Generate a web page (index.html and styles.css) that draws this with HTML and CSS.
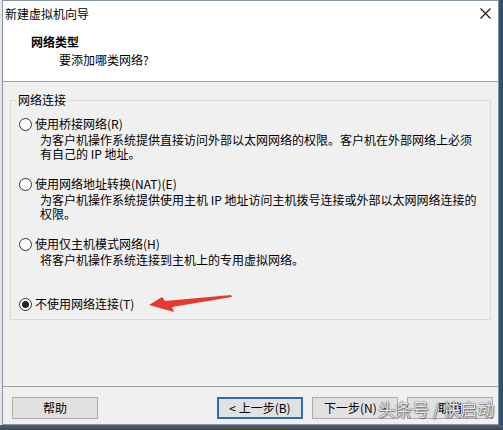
FILE: index.html
```html
<!DOCTYPE html>
<html lang="zh-CN">
<head>
<meta charset="utf-8">
<title>新建虚拟机向导</title>
<link rel="stylesheet" href="styles.css">
</head>
<body>
<div class="window">
  <div class="titlebar">
    <span class="title">新建虚拟机向导</span>
    <svg class="close" width="11" height="11" viewBox="0 0 11 11">
      <path d="M0.5 0.5 L10.5 10.5 M10.5 0.5 L0.5 10.5" stroke="#111" stroke-width="1.1" fill="none"/>
    </svg>
  </div>
  <div class="header">
    <div class="h-title">网络类型</div>
    <div class="h-sub">要添加哪类网络?</div>
  </div>
  <div class="main">
    <fieldset class="group">
      <legend>网络连接</legend>
      <div class="option">
        <div class="row"><span class="radio"></span><span>使用桥接网络(R)</span></div>
        <div class="desc">为客户机操作系统提供直接访问外部以太网网络的权限。客户机在外部网络上必须<br>有自己的 IP 地址。</div>
      </div>
      <div class="option">
        <div class="row"><span class="radio"></span><span>使用网络地址转换(NAT)(E)</span></div>
        <div class="desc">为客户机操作系统提供使用主机 IP 地址访问主机拨号连接或外部以太网网络连接的<br>权限。</div>
      </div>
      <div class="option">
        <div class="row"><span class="radio"></span><span>使用仅主机模式网络(H)</span></div>
        <div class="desc">将客户机操作系统连接到主机上的专用虚拟网络。</div>
      </div>
      <div class="option option-last">
        <div class="row"><span class="radio checked"></span><span>不使用网络连接(T)</span></div>
      </div>
    </fieldset>
  </div>
  <div class="footer">
    <button class="btn btn-help">帮助</button>
    <button class="btn btn-focus">&lt; 上一步(B)</button>
    <button class="btn">下一步(N) &gt;</button>
    <button class="btn">取消</button>
  </div>
</div>

<!-- red pointer drawn next to the last option -->
<svg class="pointer" width="90" height="26" viewBox="0 0 90 26">
  <polygon points="4,15 17,7 20,11 86,5 87,7 27,17 29,22" fill="#e43a2f"/>
</svg>

<div class="stamp">头条号 / 快启动</div>
</body>
</html>
```

FILE: styles.css
```css
html, body {
  margin: 0;
  padding: 0;
}

body {
  width: 503px;
  height: 430px;
  overflow: hidden;
  position: relative;
  background:
    linear-gradient(to bottom, transparent 425px, #55606b 425px, #3a4652 430px),
    linear-gradient(to right, #e6e6e6 2px, #2d5272 2px);
  font-family: "Noto Sans CJK SC", "Microsoft YaHei", sans-serif;
  font-size: 12px;
  color: #000;
}

.window {
  margin-left: 2px;
  width: 497px;
  height: 425px;
  box-sizing: border-box;
  border: 1px solid #8795a3;
  background: #f0f0f0;
  display: flex;
  flex-direction: column;
}

/* title bar */
.titlebar {
  height: 25px;
  flex: none;
  display: flex;
  align-items: center;
  padding-left: 2px;
  background: #fff;
}

.title {
  line-height: 16px;
}

.close {
  margin-left: auto;
  margin-right: 7px;
}

/* wizard page header */
.header {
  flex: none;
  background: #fff;
  padding: 8px 0 13px 28px;
  border-bottom: 1px solid #a0a0a0;
}

.h-title {
  font-weight: bold;
  line-height: 16px;
}

.h-sub {
  line-height: 16px;
  margin-top: 2px;
  padding-left: 28px;
}

/* page body */
.main {
  flex: none;
  height: 304px;
  box-sizing: border-box;
  padding: 10px 7px 0 7px;
}

.group {
  margin: 0;
  min-width: 0;
  border: 1px solid #dadada;
  padding: 8px 8px 7px 8px;
}

.group legend {
  padding: 0 2px;
  margin-left: -3px;
  line-height: 16px;
}

.option + .option {
  margin-top: 15px;
}

.option.option-last {
  margin-top: 29px;
}

.row {
  display: flex;
  align-items: center;
  gap: 3px;
  line-height: 16px;
  white-space: nowrap;
}

.radio {
  width: 13px;
  height: 13px;
  box-sizing: border-box;
  border: 1px solid #333;
  border-radius: 50%;
  background: #fff;
  flex: none;
  display: flex;
  align-items: center;
  justify-content: center;
}

.radio.checked::after {
  content: "";
  width: 7px;
  height: 7px;
  border-radius: 50%;
  background: #222;
}

.desc {
  padding-left: 21px;
  margin-top: 1px;
  line-height: 14px;
  white-space: nowrap;
}

/* button strip */
.footer {
  flex: none;
  border-top: 1px solid #a0a0a0;
  padding: 10px 5px 0 9px;
  display: flex;
  gap: 9px;
}

.btn {
  width: 86px;
  height: 22px;
  box-sizing: border-box;
  border: 1px solid #adadad;
  background: #e1e1e1;
  font-family: inherit;
  font-size: 12px;
  color: #000;
  padding: 0;
  line-height: 18px;
}

.btn-help {
  margin-right: auto;
}

.btn-focus {
  border: 2px solid #2f6fa5;
}

/* overlays */
.pointer {
  position: absolute;
  left: 145px;
  top: 290px;
}

.stamp {
  position: absolute;
  left: 378px;
  top: 398px;
  font-size: 17px;
  line-height: 22px;
  color: rgba(255, 255, 255, 0.85);
  text-shadow: 0 0 1px #555, 0 0 1px #555, 1px 1px 1px rgba(0, 0, 0, 0.4);
  white-space: nowrap;
}
```
